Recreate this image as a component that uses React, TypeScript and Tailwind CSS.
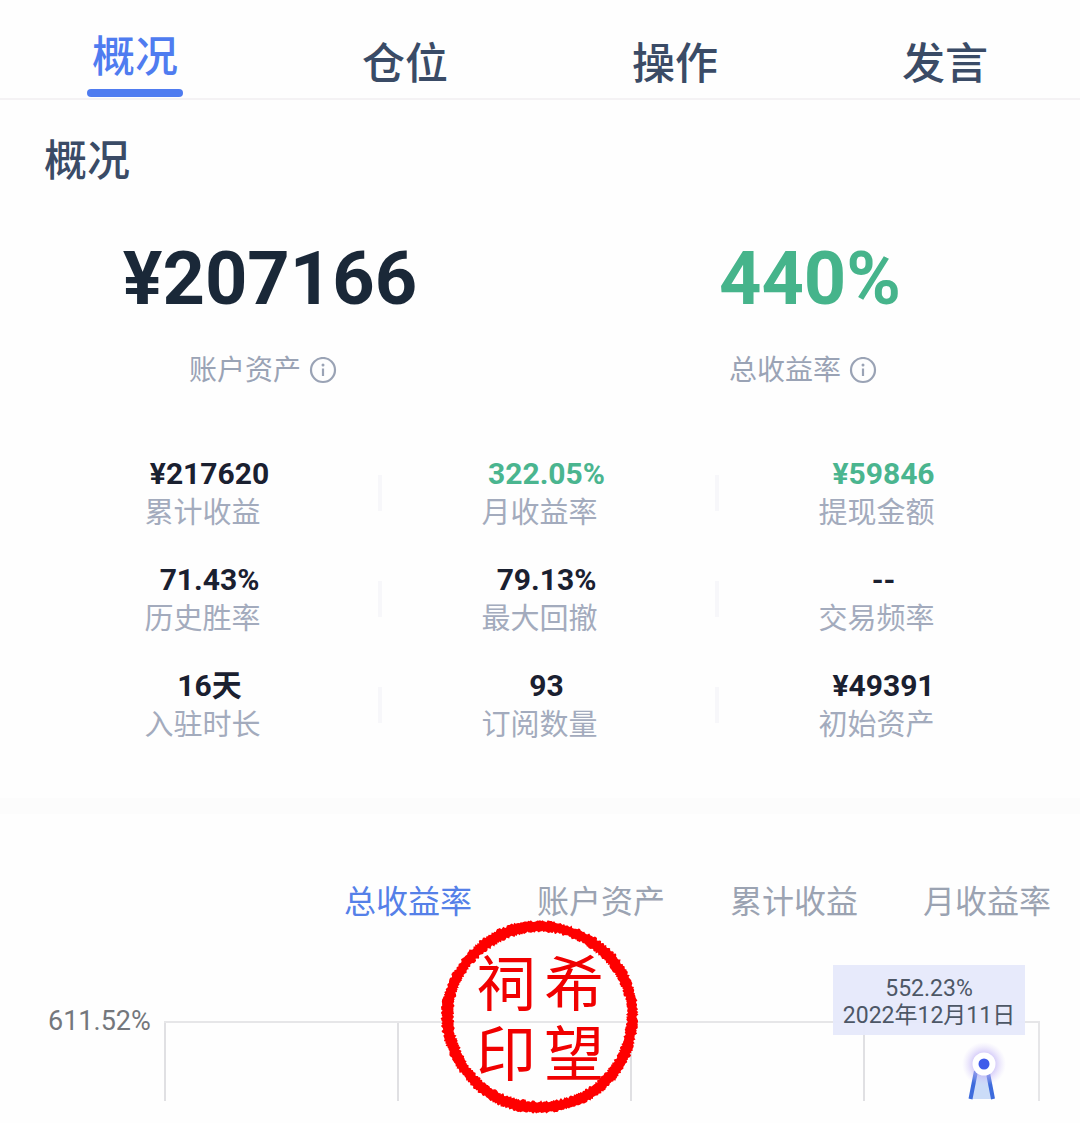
import { useState } from "react";

const tabs = ["概况", "仓位", "操作", "发言"];

const stats = [
  { value: "¥217620", label: "累计收益" },
  { value: "322.05%", label: "月收益率", up: true },
  { value: "¥59846", label: "提现金额", up: true },
  { value: "71.43%", label: "历史胜率" },
  { value: "79.13%", label: "最大回撤" },
  { value: "--", label: "交易频率" },
  { value: "16天", label: "入驻时长" },
  { value: "93", label: "订阅数量" },
  { value: "¥49391", label: "初始资产" },
];

const series = ["总收益率", "账户资产", "累计收益", "月收益率"];

function InfoIcon() {
  return (
    <svg viewBox="0 0 28 28" className="size-7" fill="none" aria-hidden="true">
      <circle cx="14" cy="13" r="12" stroke="currentColor" strokeWidth="2.2" />
      <circle cx="14" cy="8" r="1.5" fill="currentColor" />
      <path d="M14 11.500V19" stroke="currentColor" strokeWidth="2.2" />
    </svg>
  );
}

function Headline({ value, label, color }: { value: string; label: string; color: string }) {
  return (
    <div className="flex flex-col items-center gap-8">
      <strong className={`text-[74px] leading-[80px] font-bold ${color}`}>{value}</strong>
      <div className="flex items-center gap-2 pr-3.5 text-[28px] leading-10 text-[#9aa3b5]">
        <span>{label}</span>
        <button type="button" aria-label={`${label}说明`}>
          <InfoIcon />
        </button>
      </div>
    </div>
  );
}

// Seeded noise keeps the stamp's worn edge identical on every render.
function edge(rx: number, ry: number, seed: number) {
  const steps = 480;
  const points: string[] = [];
  let state = seed;
  for (let i = 0; i < steps; i++) {
    const a = (i / steps) * Math.PI * 2;
    state = (state * 1103515 + 12345) % 2147483647;
    const jitter = (state / 2147483647 - 0.5) * 2.4 + Math.sin(a * 5 + seed) * 0.5;
    points.push(`${(100 + (rx + jitter) * Math.cos(a)).toFixed(1)} ${(98 + (ry + jitter) * Math.sin(a)).toFixed(1)}`);
  }
  return `M${points.join("L")}Z`;
}

function Seal() {
  return (
    <div className="pointer-events-none absolute bottom-0 left-1/2 h-[196px] w-[200px] -translate-x-1/2">
      <svg viewBox="0 0 200 196" className="absolute inset-0 size-full" aria-hidden="true">
        <path d={`${edge(98, 96, 17)}${edge(87, 85, 91)}`} fill="#fe0000" fillRule="evenodd" />
      </svg>
      <div className="absolute inset-0 grid grid-cols-[68px_68px] content-center justify-center pt-2 text-center font-['Liberation_Serif','Noto_Sans_CJK_SC',serif] text-[60px] leading-[70px] font-normal text-[#f00000]">
        <span>祠</span>
        <span>希</span>
        <span>印</span>
        <span>望</span>
      </div>
    </div>
  );
}

export default function App() {
  const [tab, setTab] = useState(0);
  const [active, setActive] = useState(0);

  return (
    <main className="min-h-screen overflow-hidden bg-[#fefefe] font-[Roboto,'Noto_Sans_CJK_SC',sans-serif] text-[#1a2433]">
      <nav className="grid h-[100px] grid-cols-4 border-b-2 border-[#f4f2f4]">
        {tabs.map((name, i) => (
          <button
            key={name}
            type="button"
            onClick={() => setTab(i)}
            className={`flex flex-col items-center justify-end text-[43px] leading-[60px] font-medium ${
              i === tab ? "text-[#4f7cf0]" : "pb-1 text-[#3a4b66]"
            }`}
          >
            {name}
            {i === tab && <span className="mt-0.5 mb-px h-2 w-24 rounded-full bg-[#4f7cf0]" />}
          </button>
        ))}
      </nav>

      <section className="border-b-[16px] border-[#fcfcfc] pt-[31px] pb-[54px]">
        <h1 className="pl-11 text-[43px] leading-[60px] font-medium text-[#3a4b66]">概况</h1>
        <div className="mt-12 grid grid-cols-2">
          <Headline value="¥207166" label="账户资产" color="text-[#1a2838]" />
          <Headline value="440%" label="总收益率" color="text-[#46b48b]" />
        </div>

        <dl className="mt-[63px] grid grid-cols-3 gap-y-7 pr-7 pl-[41px]">
          {stats.map((s, i) => (
            <div key={s.label} className="flex items-center">
              <div className="flex grow flex-col-reverse items-center">
                <dt className="pr-3.5 text-[29px] leading-[38px] text-[#a3abbd]">{s.label}</dt>
                <dd className={`text-[30px] leading-10 font-bold ${s.up ? "text-[#4ab58f]" : "text-[#1a2030]"}`}>
                  {s.value}
                </dd>
              </div>
              {i % 3 < 2 && <span className="-mr-1 h-9 w-1 bg-[#f7f7fa]" />}
            </div>
          ))}
        </dl>
      </section>

      <section className="relative pt-16 pb-[14px]">
        <div className="flex justify-end gap-[65px] pr-[29px] text-[32px] leading-[48px]">
          {series.map((name, i) => (
            <button
              key={name}
              type="button"
              onClick={() => setActive(i)}
              className={i === active ? "text-[#5580e8]" : "text-[#9ba3b2]"}
            >
              {name}
            </button>
          ))}
        </div>

        <div className="mt-[75px] flex items-start pr-10 pl-12">
          <span className="w-[116px] py-1 text-[27px] leading-8 text-[#74777c]">611.52%</span>
          <div className="relative mt-5 h-20 grow">
            <div className="grid h-full grid-cols-[4fr_4fr_4fr_3fr] border-t-2 border-r-2 border-[#e6e6e8]">
              <div className="border-l-2 border-[#e0e0e3]" />
              <div className="border-l-2 border-[#e0e0e3]" />
              <div className="border-l-2 border-[#e0e0e3]" />
              <div className="border-l-2 border-[#e0e0e3]" />
            </div>
            <svg viewBox="0 0 64 64" className="absolute right-6 bottom-0 size-16" aria-hidden="true">
              <defs>
                <radialGradient id="glow">
                  <stop offset="0.4" stopColor="#b9a9f5" stopOpacity="0.75" />
                  <stop offset="1" stopColor="#d8d0fa" stopOpacity="0" />
                </radialGradient>
              </defs>
              <path d="M24 34H37L42 62H17Z" fill="#cbdcf8" />
              <path d="M24 34L18.500 62M36 36L41 62" stroke="#3d6bdc" strokeWidth="4" fill="none" />
              <circle cx="32" cy="27" r="22" fill="url(#glow)" />
              <circle cx="32" cy="27" r="11.500" fill="#fff" />
              <circle cx="32" cy="27" r="5.500" fill="#3f5bea" />
            </svg>
            <div className="absolute right-[15px] bottom-[66px] flex h-[70px] w-48 flex-col items-center justify-center bg-[#e6e9fb]/95 pt-1 text-[23px] leading-[27px] whitespace-nowrap text-[#4d5766]">
              <span>552.23%</span>
              <span>2022年12月11日</span>
            </div>
          </div>
        </div>
        <Seal />
      </section>
    </main>
  );
}
